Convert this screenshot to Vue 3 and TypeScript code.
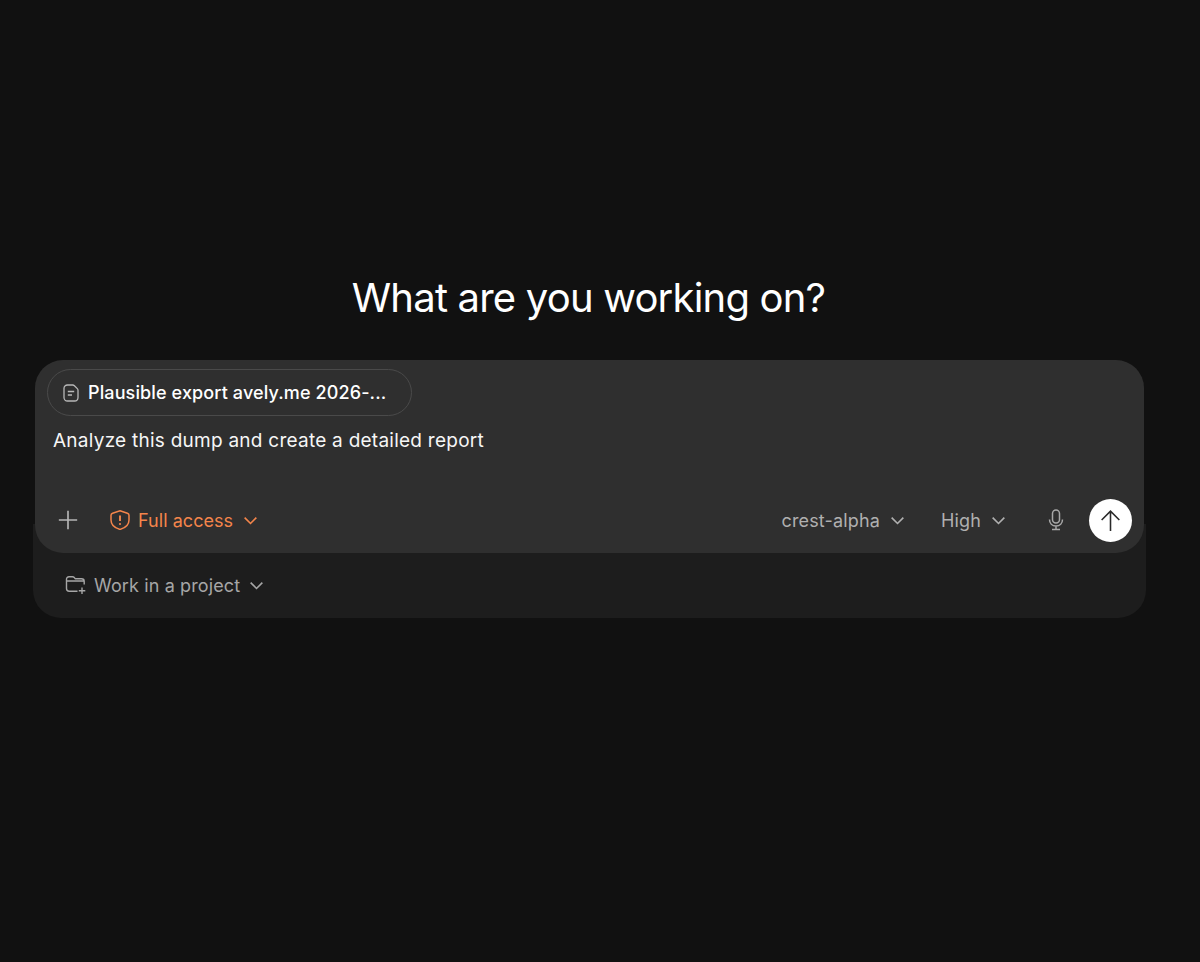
<template>
  <main class="page">
    <h1 class="title">What are you working on?</h1>
    <section class="shell">
      <div class="composer">
        <div class="chip">
          <svg class="chip__icon" viewBox="0 0 16 18" fill="none">
            <path d="M4.500 1h5.200c.7 0 1.200.2 1.700.7l2.900 2.900c.5.500.7 1 .7 1.700v7.200c0 2-1.500 3.500-3.500 3.500h-7C2.500 17 1 15.500 1 13.500v-9C1 2.500 2.500 1 4.500 1Z" />
            <path d="M4.800 7.500h6.400M4.800 11h4.200" />
          </svg>
          <span class="chip__name">Plausible export avely.me 2026-...</span>
        </div>
        <p class="prompt">Analyze this dump and create a detailed report</p>
        <div class="toolbar">
          <button class="plus" type="button" aria-label="Add">
            <svg viewBox="0 0 24 24" fill="none"><path d="M12 2v20M2 12h20" /></svg>
          </button>
          <button class="pick pick--warn" type="button">
            <svg class="pick__icon" viewBox="0 0 20 20" fill="none">
              <path d="M10 .8 17.400 3.200c.9.3 1.600 1.100 1.600 2.100v4.600c0 4.400-3.400 7.900-9 9.500-5.600-1.600-9-5.100-9-9.500V5.300c0-1 .7-1.800 1.600-2.100L10 .8Z" />
              <path d="M10 5.500v5.500" stroke-width="1.900" />
              <circle cx="10" cy="14" r=".7" fill="currentColor" stroke-width=".8" />
            </svg>
            Full access
            <svg class="chev" viewBox="0 0 16 10" fill="none"><path d="m1.500 1.800 6.500 6.500 6.500-6.500" /></svg>
          </button>
          <div class="spacer"></div>
          <button class="pick" type="button">
            {{ model }}
            <svg class="chev" viewBox="0 0 16 10" fill="none"><path d="m1.500 1.800 6.500 6.500 6.500-6.500" /></svg>
          </button>
          <button class="pick pick--effort" type="button">
            {{ effort }}
            <svg class="chev" viewBox="0 0 16 10" fill="none"><path d="m1.500 1.800 6.500 6.500 6.500-6.500" /></svg>
          </button>
          <button class="mic" type="button" aria-label="Dictate">
            <svg viewBox="0 0 18 24" fill="none">
              <rect x="5.500" y="2" width="7" height="13" rx="3.500" />
              <path d="M2.500 11.500c0 4 2.700 6.500 6.500 6.500s6.500-2.500 6.500-6.500M9 18v3.500M5 21.500h8" />
            </svg>
          </button>
          <button class="send" type="button" aria-label="Send">
            <svg viewBox="0 0 24 24" fill="none"><path d="M12 22V3M3.500 11.500 12 3l8.500 8.500" /></svg>
          </button>
        </div>
      </div>
      <div class="tray">
        <svg class="tray__icon" viewBox="0 0 22 20" fill="none">
          <path d="M1.500 6V4.300C1.500 2.800 2.500 1.800 4 1.800h3.500c.8 0 1.300.3 1.800.8l1 1.200h6.200c1.600 0 2.700 1 2.700 2.600v3.200M1.500 6h18.200M1.500 6v7.500c0 1.600 1.100 2.700 2.700 2.700h8.300" />
          <path d="M17 12.500v6.500M13.800 15.700h6.500" />
        </svg>
        <span>Work in a project</span>
        <svg class="chev chev--tray" viewBox="0 0 16 10" fill="none"><path d="m1.500 1.800 6.500 6.500 6.500-6.500" /></svg>
      </div>
    </section>
  </main>
</template>

<script setup lang="ts">
import { ref } from "vue";

const model = ref<string>("crest-alpha");
const effort = ref<string>("High");
</script>

<style>
html,
body {
  background: #111111;
}
</style>

<style scoped>
.page {
  min-height: 962px;
  box-sizing: border-box;
  padding: 270px 56px 0 33px;
  background: #111111;
  font-family: Inter, "Liberation Sans", sans-serif;
}

.title {
  margin: 0 0 34px;
  color: #ffffff;
  font-size: 40px;
  font-weight: 400;
  line-height: 56px;
  text-align: center;
  letter-spacing: -0.8px;
}

.shell {
  display: flex;
  flex-direction: column;
  margin-right: -2px;
}

.composer {
  position: relative;
  z-index: 1;
  box-sizing: border-box;
  height: 193px;
  margin: 0 2px;
  padding: 9px 12px 12px;
  background: #2f2f2f;
  border-radius: 28px;
}

.chip {
  display: flex;
  align-items: center;
  box-sizing: border-box;
  width: 365px;
  height: 47px;
  padding-left: 15px;
  border: 1.5px solid #4a4a4a;
  border-radius: 24px;
  color: #ffffff;
}

.chip__icon {
  flex: none;
  width: 16px;
  height: 18px;
  margin-right: 9px;
  stroke: #b8b8b8;
  stroke-width: 1.300;
}

.chip__name {
  font-size: 18px;
  font-weight: 500;
  letter-spacing: 0.12px;
  white-space: nowrap;
}

.prompt {
  margin: 12px 0 0 6px;
  color: #f6f6f6;
  font-size: 19px;
  line-height: 26px;
  letter-spacing: 0.25px;
}

.toolbar {
  display: flex;
  align-items: center;
  height: 44px;
  margin-top: 44px;
}

.toolbar button {
  display: flex;
  align-items: center;
  padding: 0;
  border: 0;
  background: none;
  font: inherit;
  cursor: pointer;
}

.plus {
  width: 22px;
  height: 22px;
  margin-left: 10px;
  margin-right: 31px;
}

.plus svg {
  width: 22px;
  height: 22px;
  stroke: #b5b5b5;
  stroke-width: 1.800;
}

.pick {
  color: #b0b0b0;
  font-size: 18px !important;
  letter-spacing: 0.15px;
  white-space: nowrap;
}

.pick--warn {
  color: #f4854b;
  letter-spacing: 0.05px;
}

.pick--effort {
  margin-left: 36px;
}

.pick__icon {
  width: 20px;
  height: 20px;
  margin-right: 8px;
  stroke: currentColor;
  stroke-width: 1.500;
}

.chev {
  width: 15px;
  height: 9px;
  margin-left: 10px;
  stroke: currentColor;
  stroke-width: 1.800;
}

.chev--tray {
  margin-left: 9px;
}

.spacer {
  flex: 1;
}

.mic {
  margin-left: 41px;
  margin-right: 24px;
}

.mic svg {
  width: 18px;
  height: 24px;
  stroke: #a8a8a8;
  stroke-width: 1.500;
}

.send {
  justify-content: center;
  width: 43px;
  height: 43px;
  background: #ffffff !important;
  border-radius: 50%;
}

.send svg {
  width: 25px;
  height: 25px;
  stroke: #2a2a2a;
  stroke-width: 1.500;
}

.tray {
  display: flex;
  align-items: center;
  height: 94px;
  box-sizing: border-box;
  margin-top: -29px;
  padding: 28px 0 0 32px;
  background: #1d1d1d;
  border-radius: 0 0 28px 28px;
  color: #a6a6a6;
  font-size: 18px;
  letter-spacing: 0.12px;
}

.tray__icon {
  width: 22px;
  height: 20px;
  margin-right: 7px;
  stroke: #a6a6a6;
  stroke-width: 1.400;
}
</style>
